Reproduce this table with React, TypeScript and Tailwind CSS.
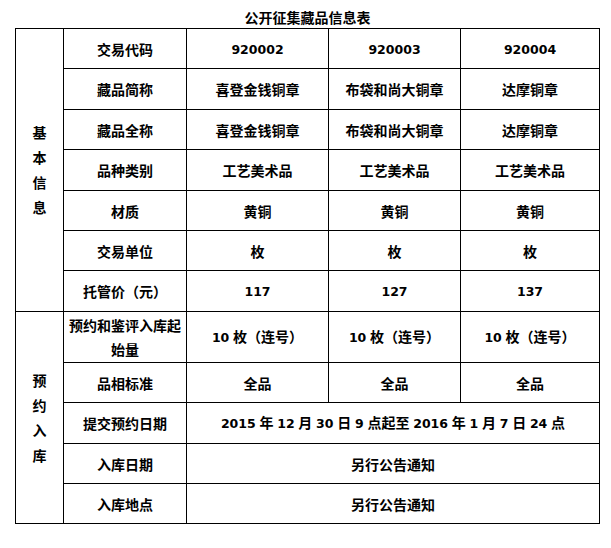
import React from 'react';

// CJK glyphs in Noto Sans CJK, Latin runs (digits, spaces) in a smaller DejaVu
const Txt: React.FC<{ t: string }> = ({ t }) => (
    <>
        {t.split(/([0-9A-Za-z ]+)/).map((s, i) =>
            /[0-9A-Za-z]/.test(s) ? (
                <span key={i} className="text-[12.5px] [word-spacing:-0.6px] font-['DejaVu_Sans',sans-serif]">
                    {s}
                </span>
            ) : (
                <span key={i}>{s}</span>
            )
        )}
    </>
);

const Cell: React.FC<{ t: string; className?: string }> = ({ t, className = '' }) => (
    <div className={`bg-white flex items-center justify-center text-center px-1 leading-[24px] ${className}`}>
        <div>
            <Txt t={t} />
        </div>
    </div>
);

const Vertical: React.FC<{ t: string; className?: string }> = ({ t, className = '' }) => (
    <div className={`bg-white flex flex-col items-center justify-center leading-[25px] ${className}`}>
        {t.split('').map((c, i) => (
            <span key={i}>{c}</span>
        ))}
    </div>
);

const basic: string[][] = [
    ['交易代码', '920002', '920003', '920004'],
    ['藏品简称', '喜登金钱铜章', '布袋和尚大铜章', '达摩铜章'],
    ['藏品全称', '喜登金钱铜章', '布袋和尚大铜章', '达摩铜章'],
    ['品种类别', '工艺美术品', '工艺美术品', '工艺美术品'],
    ['材质', '黄铜', '黄铜', '黄铜'],
    ['交易单位', '枚', '枚', '枚'],
    ['托管价（元）', '117', '127', '137'],
];

const booking: string[][] = [
    ['预约和鉴评入库起始量', '10 枚（连号）', '10 枚（连号）', '10 枚（连号）'],
    ['品相标准', '全品', '全品', '全品'],
    ['提交预约日期', '2015 年 12 月 30 日 9 点起至 2016 年 1 月 7 日 24 点'],
    ['入库日期', '另行公告通知'],
    ['入库地点', '另行公告通知'],
];

const Row: React.FC<{ cells: string[] }> = ({ cells }) => (
    <>
        <Cell t={cells[0]} />
        {cells.length === 2 ? (
            <Cell t={cells[1]} className="col-span-3" />
        ) : (
            cells.slice(1).map((c, i) => <Cell key={i} t={c} />)
        )}
    </>
);

export default function App() {
    return (
        <div className="w-[611px] h-[548px] bg-white text-black font-bold text-[14px] font-['Noto_Sans_CJK_SC',sans-serif]">
            {/* Title */}
            <div className="ml-[15px] w-[585px] h-[28px] pt-[6px] leading-[22px] text-center">
                公开征集藏品信息表
            </div>

            {/* Table */}
            <div className="ml-[15px] w-[585px] grid grid-cols-[47px_122px_141px_131px_138px] grid-rows-[39px_40px_39px_40px_39px_39px_40px_50px_39px_40px_39px_39px] gap-px p-px bg-black">
                <Vertical t="基本信息" className="row-span-7" />
                {basic.map((r, i) => (
                    <Row key={i} cells={r} />
                ))}
                <Vertical t="预约入库" className="row-span-5" />
                {booking.map((r, i) => (
                    <Row key={i} cells={r} />
                ))}
            </div>
        </div>
    );
}
